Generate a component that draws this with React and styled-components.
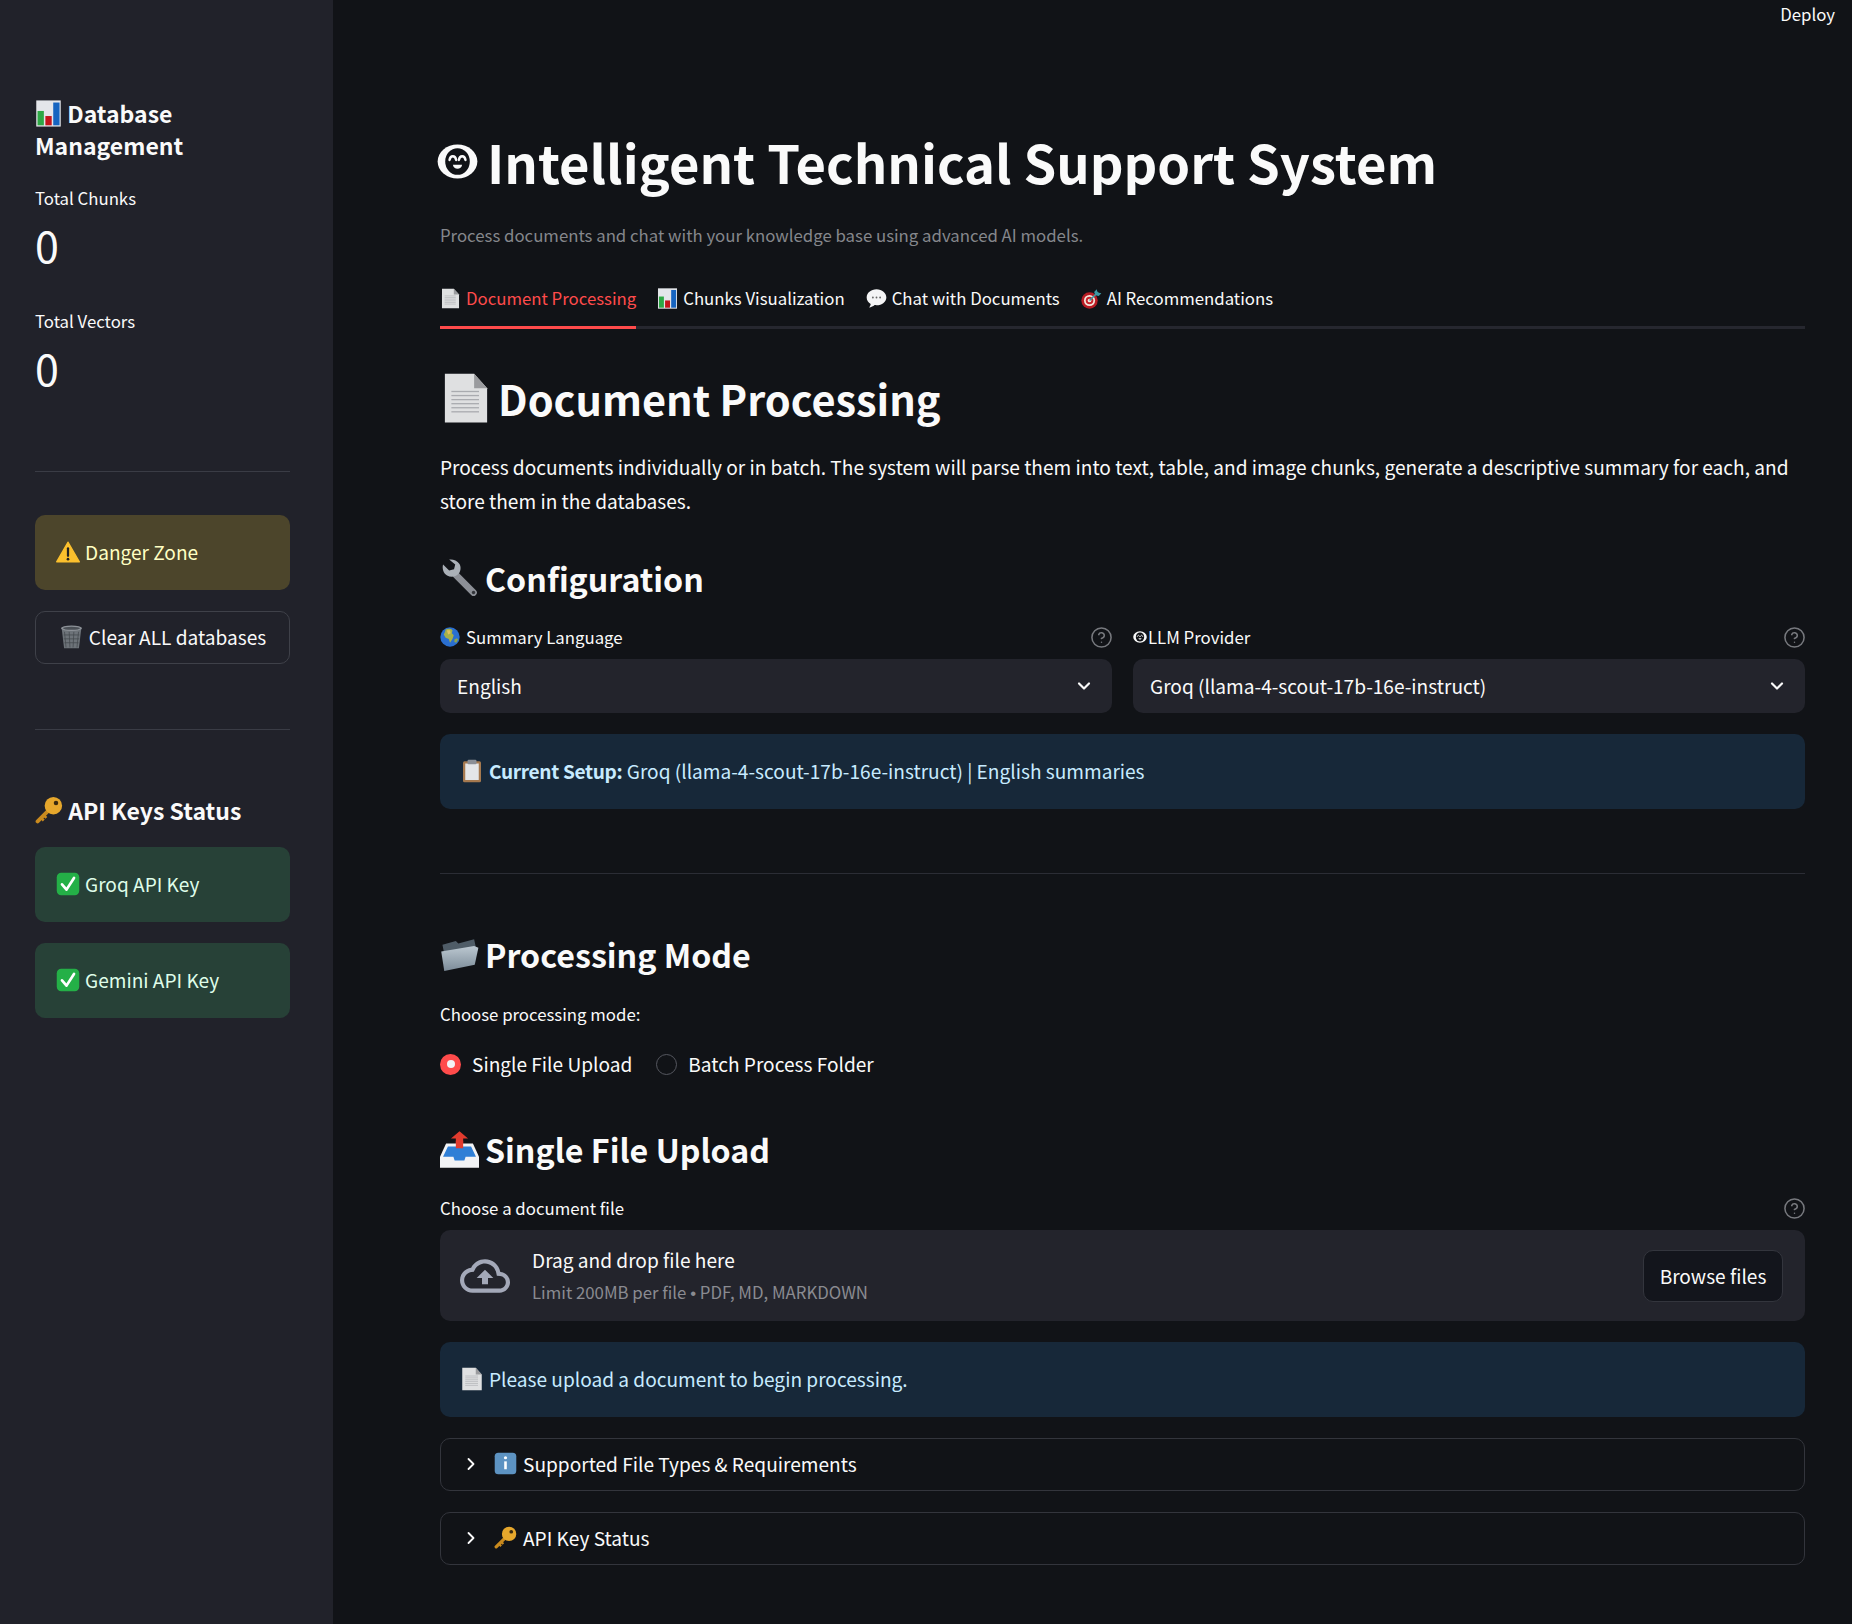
import React from "react";
import styled, { createGlobalStyle } from "styled-components";
import { ChevronDown, ChevronRight, CircleHelp } from "lucide-react";

const FONT = '"Noto Sans CJK SC", "Noto Sans", sans-serif';

const GlobalStyle = createGlobalStyle`
  html, body {
    margin: 0;
    padding: 0;
    background: #111317;
  }
  * {
    box-sizing: border-box;
  }
  body {
    font-family: ${FONT};
    color: #fafafa;
  }
`;

const Page = styled.div`
  display: flex;
  min-height: 1624px;
  background: #111317;
`;

const Sidebar = styled.aside`
  width: 333px;
  flex: none;
  padding: 97px 43px 0 35px;
  background: #21222a;
`;

const SideHeading = styled.h3`
  margin: ${(p) => p.$top || 0}px 0 0;
  font-size: 23px;
  line-height: 32px;
  font-weight: 700;
  color: #fafafa;
`;

const MetricLabel = styled.div`
  margin-top: ${(p) => p.$top}px;
  font-size: 16.8px;
  line-height: 24px;
`;

const MetricValue = styled.div`
  margin-top: 6px;
  font-size: 43px;
  line-height: 56px;
  font-weight: 400;
`;

const SideRule = styled.hr`
  margin: ${(p) => p.$top}px 0 0;
  border: 0;
  border-top: 1px solid #3a3c45;
`;

const Notice = styled.div`
  display: flex;
  align-items: center;
  gap: 5px;
  height: 75px;
  margin-top: ${(p) => p.$top}px;
  padding: 0 ${(p) => p.$pad || 21}px 2px;
  border-radius: 10px;
  font-size: 19.1px;
  line-height: 28px;
  background: ${(p) => p.$bg};
  color: ${(p) => p.$fg};

  strong {
    font-weight: 700;
    letter-spacing: -0.33px;
  }
`;

const OutlineButton = styled.button`
  display: flex;
  align-items: center;
  justify-content: center;
  gap: 5px;
  width: 100%;
  height: 53px;
  margin-top: 21px;
  padding: 0 0 2px;
  border: 1px solid #3f4149;
  border-radius: 10px;
  background: transparent;
  color: #fafafa;
  font: 400 19.1px/28px ${FONT};
`;

const Main = styled.main`
  flex: 1;
  min-width: 0;
`;

const Toolbar = styled.header`
  display: flex;
  justify-content: flex-end;
  align-items: center;
  height: 28px;
  padding-right: 17px;
  font-size: 16.8px;
  color: #fafafa;
`;

const Content = styled.div`
  padding: 98px 47px 0 107px;
`;

const Title = styled.h1`
  display: flex;
  align-items: center;
  gap: 9px;
  margin: 0 0 0 -3px;
  font-size: 52.5px;
  line-height: 70px;
  font-weight: 700;
`;

const Subtitle = styled.p`
  margin: 25px 0 0;
  font-size: 16.8px;
  line-height: 28px;
  color: #85878c;
`;

const TabBar = styled.nav`
  display: flex;
  gap: 21px;
  margin-top: 26px;
  border-bottom: 3px solid #26272f;
`;

const Tab = styled.div`
  display: flex;
  align-items: center;
  gap: 5px;
  height: 54px;
  margin-bottom: -3px;
  padding-bottom: 5px;
  border-bottom: 3px solid ${(p) => (p.$active ? "#ff4b4b" : "transparent")};
  font-size: 16.8px;
  color: ${(p) => (p.$active ? "#ff4b4b" : "#fafafa")};
`;

const SectionTitle = styled.h2`
  display: flex;
  align-items: center;
  gap: 6px;
  margin: 41px 0 0;
  font-size: 41.5px;
  line-height: 56px;
  font-weight: 700;
`;

const Body = styled.p`
  margin: 24px 0 0;
  font-size: 19.1px;
  line-height: 34px;
`;

const SubTitle = styled.h3`
  display: flex;
  align-items: center;
  gap: 6px;
  margin: ${(p) => p.$top}px 0 0;
  font-size: 32.2px;
  line-height: 44px;
  font-weight: 700;
`;

const Columns = styled.div`
  display: grid;
  grid-template-columns: 1fr 1fr;
  gap: 21px;
  margin-top: 25px;
`;

const FieldLabel = styled.div`
  display: flex;
  align-items: center;
  gap: ${(p) => p.$gap ?? 6}px;
  height: 24px;
  margin-top: ${(p) => p.$top || 0}px;
  font-size: 16.8px;
  line-height: 24px;
`;

const HelpSlot = styled.span`
  display: flex;
  margin-left: auto;
  margin-right: -1px;
  color: #77797e;
`;

const Select = styled.div`
  display: flex;
  align-items: center;
  justify-content: space-between;
  height: 54px;
  margin-top: 10px;
  padding: 0 18px 0 17px;
  border-radius: 10px;
  background: #23242c;
  font-size: 19.1px;
`;

const Rule = styled.hr`
  margin: 64px 0 0;
  border: 0;
  border-top: 1px solid #2b2d35;
`;

const RadioRow = styled.div`
  display: flex;
  gap: 24px;
  margin-top: 23px;
`;

const RadioOption = styled.label`
  display: flex;
  align-items: center;
  gap: 11px;
  height: 30px;
  font-size: 19.1px;
`;

const RadioDot = styled.span`
  width: 21px;
  height: 21px;
  border-radius: 50%;
  flex: none;
  background: ${(p) => (p.$on ? "#ff4b4b" : "transparent")};
  border: ${(p) => (p.$on ? "none" : "1.5px solid #55575f")};
  display: grid;
  place-items: center;

  &::after {
    content: "";
    display: ${(p) => (p.$on ? "block" : "none")};
    width: 8px;
    height: 8px;
    border-radius: 50%;
    background: #f4f4f6;
  }
`;

const Dropzone = styled.div`
  display: flex;
  align-items: center;
  height: 91px;
  margin-top: 10px;
  padding: 0 22px 0 20px;
  border-radius: 10px;
  background: #23242c;
`;

const CloudIcon = styled.svg`
  width: 50px;
  height: 50px;
  flex: none;
  color: #a3a8b8;
`;

const DropText = styled.div`
  margin-left: 22px;
  flex: 1;
`;

const DropTitle = styled.div`
  font-size: 19.1px;
  line-height: 30px;
`;

const DropHint = styled.div`
  margin-top: 4px;
  font-size: 16.8px;
  line-height: 26px;
  color: #8a8b91;
`;

const Bullet = styled.span`
  font-family: "Liberation Sans", sans-serif;
`;

const BrowseButton = styled.button`
  height: 52px;
  width: 140px;
  padding: 0;
  border: 1px solid #33353d;
  border-radius: 10px;
  background: #13151c;
  color: #fafafa;
  font: 400 19.1px/28px ${FONT};
`;

const Expander = styled.div`
  display: flex;
  align-items: center;
  height: 53px;
  margin-top: 21px;
  padding: 0 0 2px 20px;
  border: 1px solid #33353c;
  border-radius: 10px;
  font-size: 19.1px;
`;

const ExpanderLabel = styled.span`
  display: flex;
  align-items: center;
  gap: 6px;
  margin-left: 13px;
`;

const EmojiSvg = styled.svg`
  width: ${(p) => p.$size}px;
  height: ${(p) => p.$size}px;
  flex: none;
  vertical-align: ${(p) => p.$align || "baseline"};
`;

const paperLines = [12, 14.5, 17, 19.5, 22, 24.5].map((y) => (
  <path key={y} d={`M7 ${y}h17`} stroke="#a9abaf" strokeWidth="0.8" />
));

const DRAWINGS = {
  chart: (
    <>
      <rect x="1.5" y="0.5" width="29" height="31" fill="#e4e6ea" />
      <rect x="3" y="13" width="7.5" height="17" fill="#2ea845" />
      <rect x="12.3" y="19" width="7.5" height="11" fill="#c4161c" />
      <rect x="21.6" y="3" width="7.5" height="27" fill="#1664c0" />
    </>
  ),
  warning: (
    <>
      <path d="M16 3L31 29H1Z" fill="#fbc02d" stroke="#fbc02d" strokeWidth="2" strokeLinejoin="round" />
      <path d="M16 11v10" stroke="#222" strokeWidth="3" strokeLinecap="round" />
      <circle cx="16" cy="25.5" r="1.8" fill="#222" />
    </>
  ),
  trash: (
    <>
      <path d="M3.5 6h25l-3 25h-19Z" fill="#6d7379" />
      <path d="M7 10l2 20M13 10l1 20M19 10l-1 20M25 10l-2 20M6 14h20M6 19h20M7 24h18" stroke="#454a50" strokeWidth="1" />
      <ellipse cx="16" cy="5.5" rx="13.5" ry="3.5" fill="#8d9298" />
      <ellipse cx="16" cy="5.5" rx="11" ry="2" fill="#4b5056" />
    </>
  ),
  key: (
    <>
      <path d="M17 15L3 29" stroke="#c98a1e" strokeWidth="4.5" strokeLinecap="round" />
      <path d="M7 25l3 3M10 22l3 3" stroke="#c98a1e" strokeWidth="3" />
      <circle cx="21" cy="11" r="10" fill="#e6a72c" />
      <circle cx="24" cy="8" r="2.6" fill="#3a2a10" />
    </>
  ),
  check: (
    <>
      <rect x="1" y="1" width="30" height="30" rx="6" fill="#24b047" />
      <path d="M8 16.5l6 7L24 8" fill="none" stroke="#fff" strokeWidth="3.6" strokeLinecap="round" strokeLinejoin="round" />
    </>
  ),
  page: (
    <>
      <path d="M3 1h18l8 9v21H3Z" fill="#dfe0e1" />
      <path d="M21 1l8 9h-8Z" fill="#9a9b9e" />
      {paperLines}
    </>
  ),
  bubble: (
    <>
      <path d="M16 2C7.5 2 1 7.5 1 14.5c0 4.2 2.4 7.8 6.2 10-.3 2.1-1.2 3.8-2.5 5.3 3.2-.4 6.3-1.9 8.4-3.8.9.1 1.9.2 2.9.2 8.5 0 15-5.4 15-11.9S24.5 2 16 2Z" fill="#f4f4f5" />
      <circle cx="10.5" cy="14.5" r="1.4" fill="#666" />
      <circle cx="16" cy="14.5" r="1.4" fill="#666" />
      <circle cx="21.5" cy="14.5" r="1.4" fill="#666" />
    </>
  ),
  target: (
    <>
      <circle cx="13" cy="19" r="12.5" fill="#b81c24" />
      <circle cx="13" cy="19" r="8.5" fill="#f3e6dc" />
      <circle cx="13" cy="19" r="5.8" fill="#c9232b" />
      <circle cx="13" cy="19" r="2.8" fill="#f3e6dc" />
      <path d="M13 19L26 6" stroke="#3d98a3" strokeWidth="2.4" />
      <path d="M24 2l1 5 6 1-4 4-5-1-2-5Z" fill="#3d98a3" />
    </>
  ),
  wrench: (
    <>
      <path d="M13 13L27.5 27.5" stroke="#8c8f96" strokeWidth="5.5" strokeLinecap="round" />
      <path d="M2.5 4.5l5 5 4-1 1-4-5-4C10 0 14 1 16 4c1.5 2.6 1 6-.8 8.2-2.4 2.6-6.4 3-9.4 1.3C2.8 11.8 1.6 8 2.5 4.5Z" fill="#aab0b7" />
      <circle cx="27.5" cy="27.5" r="1.4" fill="#33353a" />
    </>
  ),
  globe: (
    <>
      <circle cx="16" cy="16" r="15.5" fill="#2a6fd0" />
      <path d="M9 4c4-2 9-1 11 1l-1 5 3 3-2 6-4 6-2-6-5-2-3-5 2-4Z" fill="#a6b04a" />
      <path d="M23 20l4-2 2 2-3 5-3-1Z" fill="#8fa54b" />
      <path d="M11 5l5 0 1 5-4 2Z" fill="#e2c25a" />
    </>
  ),
  clipboard: (
    <>
      <rect x="4" y="3" width="24" height="28" rx="2" fill="#a5794f" />
      <rect x="7" y="6" width="18" height="22" fill="#e4e6e8" />
      <rect x="10" y="1" width="12" height="6" rx="1.5" fill="#8b8f96" />
    </>
  ),
  folder: (
    <>
      <defs>
        <linearGradient id="folderFront" x1="0" y1="0" x2="0" y2="1">
          <stop offset="0" stopColor="#bcc8d1" />
          <stop offset="1" stopColor="#7c8c99" />
        </linearGradient>
      </defs>
      <path d="M2 8l11-3 2 2 13-3.5 1.5 7L6 28Z" fill="#4f5c67" />
      <path d="M1 13.5l27-4.5 3.5 1.5-3 14L3.5 29.5Z" fill="url(#folderFront)" />
    </>
  ),
  inbox: (
    <>
      <path d="M13 13V7H9l7-6 7 6h-4v6Z" fill="#e23b2e" />
      <path d="M5 11h22l5 11v9H0v-9Z" fill="#f2f3f5" />
      <path d="M6.5 13.5h19l4 8.5H21l-1 3h-8l-1-3H2.5Z" fill="#2f7fd6" />
      <path d="M13 15V9h6v6Z" fill="#e23b2e" />
    </>
  ),
  info: (
    <>
      <rect x="1" y="1" width="30" height="30" rx="5" fill="#5d93c2" />
      <circle cx="16" cy="8" r="2.2" fill="#fff" />
      <path d="M16 13v11" stroke="#fff" strokeWidth="3.6" />
    </>
  ),
  robot: (
    <>
      <ellipse cx="16" cy="16" rx="15.5" ry="13.2" fill="#fafafa" />
      <ellipse cx="16" cy="16" rx="9.6" ry="10.4" fill="#111317" />
      <path d="M9.8 14.8c.5-3.8 4.6-3.8 5.1 0M17.1 14.8c.5-3.8 4.6-3.8 5.1 0" fill="none" stroke="#fafafa" strokeWidth="1.9" strokeLinecap="round" />
      <path d="M12.4 18.6h7.2c-.4 4.2-6.8 4.2-7.2 0Z" fill="#fafafa" />
    </>
  ),
};

const Emoji = ({ kind, size, align }) => (
  <EmojiSvg viewBox="0 0 32 32" $size={size} $align={align} aria-hidden="true">
    {DRAWINGS[kind]}
  </EmojiSvg>
);

const Help = () => (
  <HelpSlot>
    <CircleHelp size={23} strokeWidth={1.6} />
  </HelpSlot>
);

export default function App() {
  return (
    <>
      <GlobalStyle />
      <Page>
        <Sidebar>
          <SideHeading>
            <Emoji kind="chart" size={27} align="-4px" />{" "}
            Database Management
          </SideHeading>
          <MetricLabel $top={25}>Total Chunks</MetricLabel>
          <MetricValue>0</MetricValue>
          <MetricLabel $top={37}>Total Vectors</MetricLabel>
          <MetricValue>0</MetricValue>
          <SideRule $top={76} />
          <Notice $top={43} $bg="#4c452b" $fg="#ffffc2">
            <Emoji kind="warning" size={24} />
            Danger Zone
          </Notice>
          <OutlineButton>
            <Emoji kind="trash" size={25} />
            Clear ALL databases
          </OutlineButton>
          <SideRule $top={65} />
          <SideHeading $top={64}>
            <Emoji kind="key" size={28} align="-4px" /> API Keys Status
          </SideHeading>
          <Notice $top={21} $bg="#274137" $fg="#dffde9">
            <Emoji kind="check" size={24} />
            Groq API Key
          </Notice>
          <Notice $top={21} $bg="#274137" $fg="#dffde9">
            <Emoji kind="check" size={24} />
            Gemini API Key
          </Notice>
        </Sidebar>

        <Main>
          <Toolbar>Deploy</Toolbar>
          <Content>
            <Title>
              <Emoji kind="robot" size={41} />
              Intelligent Technical Support System
            </Title>
            <Subtitle>Process documents and chat with your knowledge base using advanced AI models.</Subtitle>

            <TabBar>
              <Tab $active>
                <Emoji kind="page" size={21} />
                Document Processing
              </Tab>
              <Tab>
                <Emoji kind="chart" size={21} />
                Chunks Visualization
              </Tab>
              <Tab>
                <Emoji kind="bubble" size={21} />
                Chat with Documents
              </Tab>
              <Tab>
                <Emoji kind="target" size={21} />
                AI Recommendations
              </Tab>
            </TabBar>

            <SectionTitle>
              <Emoji kind="page" size={52} />
              Document Processing
            </SectionTitle>
            <Body>
              Process documents individually or in batch. The system will parse them into text, table, and image chunks,
              generate a descriptive summary for each, and store them in the databases.
            </Body>

            <SubTitle $top={38}>
              <Emoji kind="wrench" size={39} />
              Configuration
            </SubTitle>
            <Columns>
              <div>
                <FieldLabel>
                  <Emoji kind="globe" size={20} />
                  Summary Language
                  <Help />
                </FieldLabel>
                <Select>
                  English
                  <ChevronDown size={20} strokeWidth={2.6} />
                </Select>
              </div>
              <div>
                <FieldLabel $gap={1}>
                  <Emoji kind="robot" size={14} />
                  LLM Provider
                  <Help />
                </FieldLabel>
                <Select>
                  Groq (llama-4-scout-17b-16e-instruct)
                  <ChevronDown size={20} strokeWidth={2.6} />
                </Select>
              </div>
            </Columns>

            <Notice $top={21} $pad={20} $bg="#172839" $fg="#c7ebff">
              <Emoji kind="clipboard" size={24} />
              <span>
                <strong>Current Setup:</strong> Groq (llama-4-scout-17b-16e-instruct) | English summaries
              </span>
            </Notice>

            <Rule />

            <SubTitle $top={58}>
              <Emoji kind="folder" size={39} />
              Processing Mode
            </SubTitle>
            <FieldLabel $top={26}>Choose processing mode:</FieldLabel>
            <RadioRow>
              <RadioOption>
                <RadioDot $on />
                Single File Upload
              </RadioOption>
              <RadioOption>
                <RadioDot />
                Batch Process Folder
              </RadioOption>
            </RadioRow>

            <SubTitle $top={48}>
              <Emoji kind="inbox" size={39} />
              Single File Upload
            </SubTitle>
            <FieldLabel $top={25}>
              Choose a document file
              <Help />
            </FieldLabel>
            <Dropzone>
              <CloudIcon viewBox="0 0 24 24" fill="currentColor">
                <path d="M19.35 10.04C18.67 6.59 15.64 4 12 4 9.11 4 6.6 5.64 5.35 8.04 2.34 8.36 0 10.91 0 14c0 3.31 2.69 6 6 6h13c2.76 0 5-2.24 5-5 0-2.64-2.05-4.78-4.65-4.96zM19 18H6c-2.21 0-4-1.79-4-4 0-2.05 1.53-3.76 3.56-3.97l1.07-.11.5-.95C8.08 7.14 9.94 6 12 6c2.62 0 4.88 1.86 5.39 4.43l.3 1.5 1.53.11c1.56.1 2.78 1.41 2.78 2.96 0 1.65-1.35 3-3 3zM8 13h2.55v3h2.9v-3H16l-4-4z" />
              </CloudIcon>
              <DropText>
                <DropTitle>Drag and drop file here</DropTitle>
                <DropHint>
                  Limit 200MB per file <Bullet>•</Bullet> PDF, MD, MARKDOWN
                </DropHint>
              </DropText>
              <BrowseButton>Browse files</BrowseButton>
            </Dropzone>

            <Notice $top={21} $pad={20} $bg="#172839" $fg="#c7ebff">
              <Emoji kind="page" size={24} />
              Please upload a document to begin processing.
            </Notice>

            <Expander>
              <ChevronRight size={20} strokeWidth={2.2} />
              <ExpanderLabel>
                <Emoji kind="info" size={23} />
                Supported File Types &amp; Requirements
              </ExpanderLabel>
            </Expander>
            <Expander>
              <ChevronRight size={20} strokeWidth={2.2} />
              <ExpanderLabel>
                <Emoji kind="key" size={23} />
                API Key Status
              </ExpanderLabel>
            </Expander>
          </Content>
        </Main>
      </Page>
    </>
  );
}
